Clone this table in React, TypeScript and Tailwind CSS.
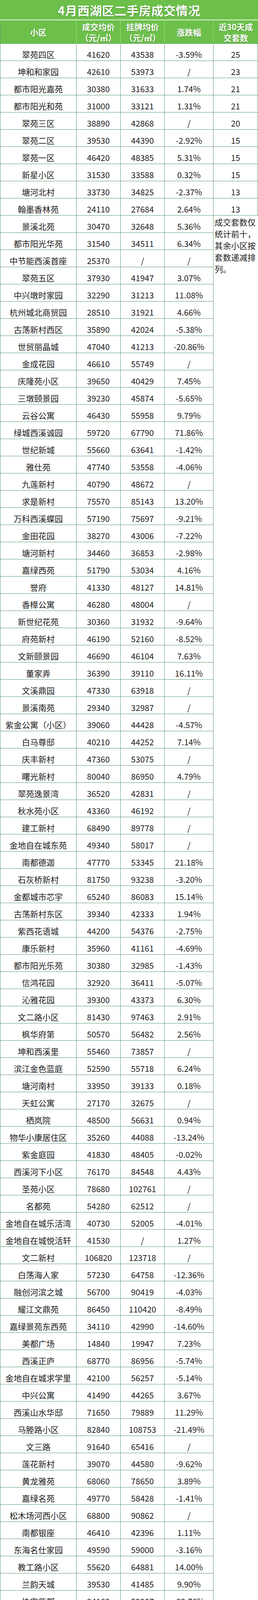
import React from 'react';

// 小区, 成交均价, 挂牌均价, 涨跌幅, 近30天成交套数
const rows: [string, string, string, string, string?][] = [
  ['翠苑四区', '41620', '43538', '-3.59%', '25'],
  ['坤和和家园', '42610', '53973', '/', '23'],
  ['都市阳光嘉苑', '30380', '31633', '1.74%', '21'],
  ['都市阳光和苑', '31000', '33121', '1.31%', '21'],
  ['翠苑三区', '38890', '42868', '/', '20'],
  ['翠苑二区', '39530', '44390', '-2.92%', '15'],
  ['翠苑一区', '46420', '48385', '5.31%', '15'],
  ['新星小区', '31530', '33588', '0.32%', '15'],
  ['塘河北村', '33730', '34825', '-2.37%', '13'],
  ['翰墨香林苑', '24110', '27684', '2.64%', '13'],
  ['景溪北苑', '30470', '32648', '5.36%'],
  ['都市阳光华苑', '31540', '34511', '6.34%'],
  ['中节能西溪首座', '25370', '/', '/'],
  ['翠苑五区', '37930', '41947', '3.07%'],
  ['中兴墩时家园', '32290', '31213', '11.08%'],
  ['杭州城北商贸园', '28510', '31921', '4.66%'],
  ['古荡新村西区', '35890', '42024', '-5.38%'],
  ['世贸丽晶城', '47040', '41213', '-20.86%'],
  ['金成花园', '46610', '55749', '/'],
  ['庆隆苑小区', '39650', '40429', '7.45%'],
  ['三墩颐景园', '39230', '45874', '-5.65%'],
  ['云谷公寓', '46430', '55958', '9.79%'],
  ['绿城西溪诚园', '59720', '67790', '71.86%'],
  ['世纪新城', '55660', '63641', '-1.42%'],
  ['雅仕苑', '47740', '53558', '-4.06%'],
  ['九莲新村', '40790', '48672', '/'],
  ['求是新村', '75570', '85143', '13.20%'],
  ['万科西溪蝶园', '57190', '75697', '-9.21%'],
  ['金田花园', '38270', '43006', '-7.22%'],
  ['塘河新村', '34460', '36853', '-2.98%'],
  ['嘉绿西苑', '51790', '53034', '4.16%'],
  ['誉府', '41330', '48127', '14.81%'],
  ['香樟公寓', '46280', '48004', '/'],
  ['新世纪花苑', '30360', '31932', '-9.64%'],
  ['府苑新村', '46190', '52160', '-8.52%'],
  ['文新颐景园', '46690', '46104', '7.63%'],
  ['董家弄', '36390', '39110', '16.11%'],
  ['文溪鼎园', '47330', '63918', '/'],
  ['景溪南苑', '29340', '32987', '/'],
  ['紫金公寓（小区）', '39060', '44428', '-4.57%'],
  ['白马尊邸', '40210', '44252', '7.14%'],
  ['庆丰新村', '47360', '53075', '/'],
  ['曙光新村', '80040', '86950', '4.79%'],
  ['翠苑逸景湾', '36520', '42831', '/'],
  ['秋水苑小区', '43360', '46192', '/'],
  ['建工新村', '68490', '89778', '/'],
  ['金地自在城东苑', '49340', '58017', '/'],
  ['南都德迦', '47770', '53345', '21.18%'],
  ['石灰桥新村', '81750', '93238', '-3.20%'],
  ['金都城市芯宇', '65240', '86083', '15.14%'],
  ['古荡新村东区', '39340', '42333', '1.94%'],
  ['紫西花语城', '44200', '54376', '-2.75%'],
  ['康乐新村', '35960', '41161', '-4.69%'],
  ['都市阳光乐苑', '30380', '32985', '-1.43%'],
  ['信鸿花园', '32920', '36411', '-5.07%'],
  ['沁雅花园', '39300', '43373', '6.30%'],
  ['文二路小区', '81430', '97463', '2.91%'],
  ['枫华府第', '50570', '56482', '2.56%'],
  ['坤和西溪里', '55460', '73857', '/'],
  ['滨江金色蓝庭', '52590', '55718', '6.24%'],
  ['塘河南村', '33950', '39133', '0.18%'],
  ['天虹公寓', '27170', '32675', '/'],
  ['栖岚院', '48500', '56631', '0.94%'],
  ['物华小康居住区', '35260', '44088', '-13.24%'],
  ['紫金庭园', '41830', '48405', '-0.02%'],
  ['西溪河下小区', '76170', '84548', '4.43%'],
  ['圣苑小区', '78680', '102761', '/'],
  ['名都苑', '54280', '62512', '/'],
  ['金地自在城乐活湾', '40730', '52005', '-4.01%'],
  ['金地自在城悦活轩', '41530', '/', '1.27%'],
  ['文二新村', '106820', '123718', '/'],
  ['白荡海人家', '57230', '64758', '-12.36%'],
  ['融创河滨之城', '56700', '90419', '-4.03%'],
  ['耀江文鼎苑', '86450', '110420', '-8.49%'],
  ['嘉绿景苑东西苑', '34110', '42990', '-14.60%'],
  ['美都广场', '14840', '19947', '7.23%'],
  ['西溪正庐', '68770', '86956', '-5.74%'],
  ['金地自在城求学里', '42100', '56257', '-5.14%'],
  ['中兴公寓', '41490', '44265', '3.67%'],
  ['西溪山水华邸', '71650', '79889', '11.29%'],
  ['马塍路小区', '82840', '108753', '-21.49%'],
  ['文三路', '91640', '65416', '/'],
  ['莲花新村', '39070', '44580', '-9.62%'],
  ['黄龙雅苑', '68060', '78650', '3.89%'],
  ['嘉绿名苑', '49770', '58428', '-1.41%'],
  ['松木场河西小区', '68800', '90862', '/'],
  ['南都银座', '46410', '42396', '1.11%'],
  ['东海名仕家园', '49590', '59000', '-3.16%'],
  ['教工路小区', '55620', '64881', '14.00%'],
  ['兰韵天城', '39530', '41485', '9.90%'],
  ['协安紫郡', '34160', '52907', '-32.76%'],
  ['学院路', '38410', '61731', '/'],
  ['同仁家园', '32830', '37640', '/'],
  ['新安嘉苑', '27670', '42397', '/'],
  ['兰庭国际', '60570', '61055', '/'],
  ['梧桐公寓', '78310', '81726', '/'],
  ['景城花园', '46090', '56181', '/'],
  ['厚诚路', '28460', '33197', '/'],
  ['嘉绿南苑', '53010', '51080', '4.89%'],
  ['花园西村', '88530', '108319', '/'],
];

const cols = 'grid grid-cols-[195px_113px_113px_125px_114px]';
// text sits a little below the middle of each row in the original
const cell = 'flex items-center justify-center pt-[12px] whitespace-nowrap border-r border-b border-[#5a9873]';
const head =
  'flex flex-col items-center justify-center text-center border-r border-[#a9dc8f] font-bold text-white leading-[28px] [text-shadow:0_1px_2px_rgba(40,90,20,0.55)]';

export default function App() {
  return (
    <div className="w-[661px] bg-white [font-family:'Noto_Sans_CJK_SC','Noto_Sans',sans-serif] text-[#1c1c1c]">
      {/* 标题 */}
      <div className="h-[52px] bg-[#6cc04a] border-b-2 border-[#e8f5df] flex items-center justify-center">
        <h1 className="text-[31px] leading-none font-bold text-white tracking-[0.5px] [text-shadow:0_1px_3px_rgba(40,90,20,0.6)]">
          4月西湖区二手房成交情况
        </h1>
      </div>

      {/* 表头 */}
      <div className={cols + ' h-[60px] bg-[#6cc04a] border-l border-[#5a9873] border-b text-[21px]'}>
        <div className={head}>小区</div>
        <div className={head}>
          <span>成交均价</span>
          <span>（元/㎡）</span>
        </div>
        <div className={head}>
          <span>挂牌均价</span>
          <span>（元/㎡）</span>
        </div>
        <div className={head}>涨跌幅</div>
        <div className={head + ' border-r-0'}>
          <span>近30天成</span>
          <span>交套数</span>
        </div>
      </div>

      {/* 数据 */}
      <div className={cols + ' auto-rows-[44px] border-l border-[#5a9873] text-[21px] leading-none'}>
        {rows.map((r, i) => (
          <React.Fragment key={r[0] + i}>
            <div className={cell}>{r[0]}</div>
            <div className={cell}>{r[1]}</div>
            <div className={cell}>{r[2]}</div>
            <div className={cell}>{r[3]}</div>
            {i < 10 && <div className={cell}>{r[4]}</div>}
            {i === 10 && (
              <div className="row-span-90 px-[3px] pt-[1px] text-left leading-[30px]">
                成交套数仅统计前十，其余小区按套数递减排列。
              </div>
            )}
          </React.Fragment>
        ))}
      </div>
    </div>
  );
}
